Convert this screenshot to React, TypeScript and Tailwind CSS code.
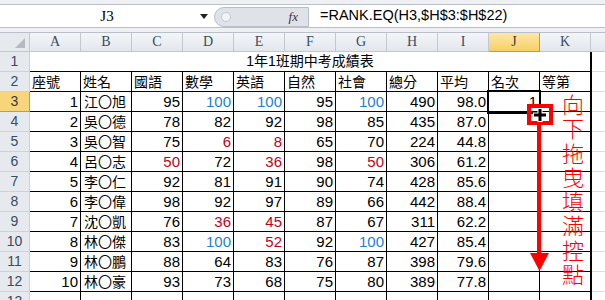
import React from "react";

const BLUE = "text-[#1d7fd6]";
const RED = "text-[#c0001c]";

type Row = [number, string, number, number, number, number, number, number, string];

const rows: Row[] = [
  [1, "江〇旭", 95, 100, 100, 95, 100, 490, "98.0"],
  [2, "吳〇德", 78, 82, 92, 98, 85, 435, "87.0"],
  [3, "吳〇智", 75, 6, 8, 65, 70, 224, "44.8"],
  [4, "呂〇志", 50, 72, 36, 98, 50, 306, "61.2"],
  [5, "李〇仁", 92, 81, 91, 90, 74, 428, "85.6"],
  [6, "李〇偉", 98, 92, 97, 89, 66, 442, "88.4"],
  [7, "沈〇凱", 76, 36, 45, 87, 67, 311, "62.2"],
  [8, "林〇傑", 83, 100, 52, 92, 100, 427, "85.4"],
  [9, "林〇鵬", 88, 64, 83, 76, 87, 398, "79.6"],
  [10, "林〇豪", 93, 73, 68, 75, 80, 389, "77.8"],
];

const cols = ["A", "B", "C", "D", "E", "F", "G", "H", "I", "J", "K"];
const heads = ["座號", "姓名", "國語", "數學", "英語", "自然", "社會", "總分", "平均", "名次", "等第"];

function scoreColor(v: number) {
  if (v === 100) return BLUE;
  if (v < 60) return RED;
  return "text-black";
}

function RowHead({ n, active }: { n: number; active?: boolean }) {
  return (
    <div
      className={`w-[30px] shrink-0 border-r border-b text-center leading-[19px] text-[14px] font-['Liberation_Sans',sans-serif] ${
        active ? "bg-[#f8d47a] border-[#c29a4e] text-[#3a3a3a]" : "bg-[#e6e9ed] border-[#cdd2d8] text-[#3a4b62]"
      }`}
    >
      {n}
    </div>
  );
}

function Cell({ children, className = "", last }: { children?: React.ReactNode; className?: string; last?: boolean }) {
  return (
    <div
      className={`shrink-0 border-b border-black overflow-hidden whitespace-nowrap ${
        last ? "w-[52px] border-r-2" : "w-[51px] border-r"
      } ${className}`}
    >
      {children}
    </div>
  );
}

const num = "text-right pr-[2px] pt-[1px] leading-[18px] text-[15px] font-['Liberation_Sans',sans-serif]";
const cjk = "pl-[2px] leading-[19px] text-[14px] font-['Noto_Sans_CJK_TC',sans-serif]";

function Rest() {
  return <div className="flex-1 border-b border-[#d9dde3] bg-white" />;
}

export default function App() {
  return (
    <div className="relative w-[605px] h-[300px] overflow-hidden bg-white select-none">
      {/* formula bar */}
      <div className="h-[5px] bg-[#eef0f3] border-b border-[#b9c0c9]" />
      <div className="flex h-[22px] bg-white">
        <div className="relative w-[214px] flex items-center justify-center text-[15px] font-['Liberation_Serif',serif] text-black">
          J3
          <svg className="absolute right-[6px] top-[9px]" width="8" height="5" viewBox="0 0 8 5">
            <polygon points="0,0 8,0 4,5" fill="#222" />
          </svg>
        </div>
        <div className="relative w-[95px] mt-[2px] h-[20px] bg-[#dfe3e9] border border-[#b7bec8] rounded-l-full flex items-center">
          <div className="ml-[6px] w-[10px] h-[10px] rounded-full bg-[#f1f3f6] border border-[#c3c9d1]" />
          <span className="ml-auto mr-[10px] italic text-[13px] font-['Liberation_Serif',serif] text-[#333]">fx</span>
        </div>
        <div className="flex-1 pl-[11px] flex items-center text-[14.5px] font-['Liberation_Sans',sans-serif] text-black">
          =RANK.EQ(H3,$H$3:$H$22)
        </div>
      </div>
      <div className="h-[6px] bg-[#eef0f3] border-y border-[#b9c0c9]" />

      {/* column headers */}
      <div className="flex h-[19px]">
        <div className="relative w-[30px] shrink-0 bg-[#e6e9ed] border-r border-b border-[#c3c8cf]">
          <svg className="absolute right-[4px] bottom-[3px]" width="10" height="10" viewBox="0 0 10 10">
            <polygon points="10,0 10,10 0,10" fill="#b5bac1" />
          </svg>
        </div>
        {cols.map((c) => (
          <div
            key={c}
            className={`w-[51px] shrink-0 border-r border-b text-center leading-[18px] text-[14px] font-['Liberation_Serif',serif] ${
              c === "J"
                ? "bg-gradient-to-b from-[#fde7a6] to-[#f8cf62] border-[#c29a4e] text-[#3a3a3a]"
                : "bg-gradient-to-b from-[#f3f5f8] to-[#e3e7ec] border-[#c3c8cf] text-[#3a4b62]"
            }`}
          >
            {c}
          </div>
        ))}
        <div className="flex-1 bg-gradient-to-b from-[#f3f5f8] to-[#e3e7ec] border-b border-[#c3c8cf]" />
      </div>

      {/* row 1: title */}
      <div className="flex h-[20px]">
        <RowHead n={1} />
        <div className="w-[562px] shrink-0 border-b border-r-2 border-black text-center leading-[19px] text-[14px] font-['Liberation_Sans','Noto_Sans_CJK_TC',sans-serif]">
          1年1班期中考成績表
        </div>
        <Rest />
      </div>

      {/* row 2: headings */}
      <div className="flex h-[20px]">
        <RowHead n={2} />
        {heads.map((h, i) => (
          <Cell key={h} last={i === 10} className={cjk}>
            {h}
          </Cell>
        ))}
        <Rest />
      </div>

      {/* data rows */}
      {rows.map((r, idx) => (
        <div key={r[0]} className="flex h-[20px]">
          <RowHead n={idx + 3} active={idx === 0} />
          <Cell className={num}>{r[0]}</Cell>
          <Cell className={`${cjk} pl-[3px]`}>{r[1]}</Cell>
          {[r[2], r[3], r[4], r[5], r[6]].map((v, i) => (
            <Cell key={i} className={`${num} ${scoreColor(v)}`}>
              {v}
            </Cell>
          ))}
          <Cell className={num}>{r[7]}</Cell>
          <Cell className={num}>{r[8]}</Cell>
          <Cell className={num}>{idx === 0 ? 1 : ""}</Cell>
          <Cell last />
          <Rest />
        </div>
      ))}

      {/* row 13 (cut off) */}
      <div className="flex h-[20px]">
        <RowHead n={13} />
        {cols.map((c, i) => (
          <Cell key={c} last={i === 10} />
        ))}
        <Rest />
      </div>

      {/* active cell J3 */}
      <div className="absolute left-[487px] top-[90px] w-[54px] h-[24px] border-2 border-black" />

      {/* red annotation: fill handle box, arrow, text */}
      <div className="absolute left-[527px] top-[104px] w-[26px] h-[21px] border-[4px] border-[#ff0000]" />
      <svg className="absolute left-[532px] top-[107px]" width="16" height="16" viewBox="0 0 16 16">
        <path d="M8 1 V15 M1 8 H15" stroke="#fff" strokeWidth="5" />
        <path d="M8 2 V14 M2 8 H14" stroke="#000" strokeWidth="3" />
      </svg>
      <div className="absolute left-[537px] top-[125px] w-[4px] h-[130px] bg-[#ff0000]" />
      <svg className="absolute left-[530px] top-[253px]" width="19" height="18" viewBox="0 0 19 18">
        <polygon points="0,0 19,0 9.5,18" fill="#ff0000" />
      </svg>
      <div className="absolute left-[562px] top-[91px] w-[22px] text-[22px] leading-[24.3px] font-light text-[#ff0000] font-['Noto_Sans_CJK_TC',sans-serif] text-center">
        {"向下拖曳填滿控點".split("").map((ch, i) => (
          <div key={i}>{ch}</div>
        ))}
      </div>
    </div>
  );
}
